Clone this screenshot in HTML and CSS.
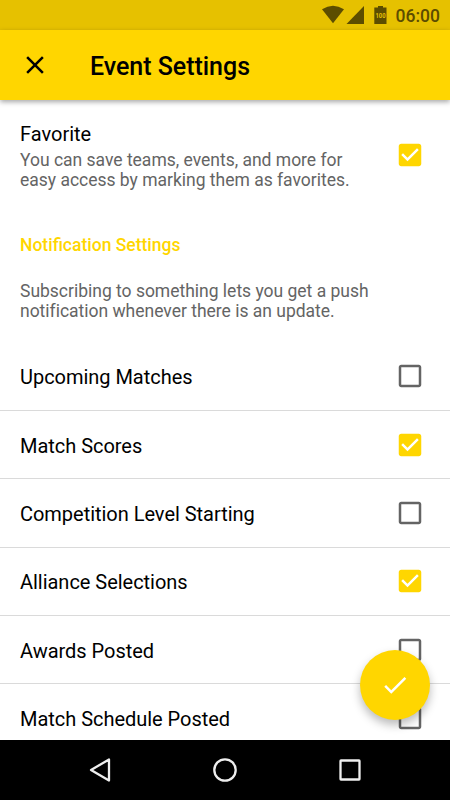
FILE: index.html
```html
<!DOCTYPE html>
<html lang="en">
<head>
<meta charset="utf-8">
<title>Event Settings</title>
<link rel="stylesheet" href="styles.css">
</head>
<body>
<svg width="0" height="0" class="defs">
  <symbol id="off" viewBox="0 0 24 24"><path d="M19 5v14H5V5h14m0-2H5c-1.1 0-2 .9-2 2v14c0 1.1.9 2 2 2h14c1.1 0 2-.9 2-2V5c0-1.1-.9-2-2-2z"/></symbol>
  <symbol id="on" viewBox="0 0 24 24"><path d="M19 3H5c-1.1 0-2 .9-2 2v14c0 1.1.9 2 2 2h14c1.1 0 2-.9 2-2V5c0-1.1-.9-2-2-2zm-9 14l-5-5 1.4-1.4 3.6 3.6 7.600-7.600L19 8l-9 9z"/></symbol>
</svg>
<div class="screen">
  <div class="status">
    <svg class="signals" width="70" height="30" viewBox="0 0 70 30">
      <path d="M2 9.300Q13 2.300 24 9.300L13 23.300z"/>
      <path d="M44 6v18H26.500z"/>
      <path d="M58 6h5v1.500h3.500V24H54.300V7.500H58z"/>
      <text x="60.500" y="17.700" text-anchor="middle" textLength="10" lengthAdjust="spacingAndGlyphs">100</text>
    </svg>
    <span class="clock">06:00</span>
  </div>
  <header class="bar">
    <svg class="close" width="30" height="30" viewBox="0 0 24 24"><path d="M19 6.410 17.590 5 12 10.590 6.410 5 5 6.410 10.590 12 5 17.590 6.410 19 12 13.410 17.590 19 19 17.590 13.410 12z"/></svg>
    <h1>Event Settings</h1>
  </header>
  <main class="content">
    <section class="favorite">
      <div class="text">
        <h2>Favorite</h2>
        <p>You can save teams, events, and more for<br>easy access by marking them as favorites.</p>
      </div>
      <svg class="check on"><use href="#on"/></svg>
    </section>
    <h3>Notification Settings</h3>
    <p class="intro">Subscribing to something lets you get a push<br>notification whenever there is an update.</p>
    <ul class="options">
      <li><span>Upcoming Matches</span><svg class="check"><use href="#off"/></svg></li>
      <li><span>Match Scores</span><svg class="check on"><use href="#on"/></svg></li>
      <li><span>Competition Level Starting</span><svg class="check"><use href="#off"/></svg></li>
      <li><span>Alliance Selections</span><svg class="check on"><use href="#on"/></svg></li>
      <li><span>Awards Posted</span><svg class="check"><use href="#off"/></svg></li>
      <li><span>Match Schedule Posted</span><svg class="check"><use href="#off"/></svg></li>
    </ul>
  </main>
  <button class="fab" aria-label="Save"><svg width="30" height="30" viewBox="0 0 24 24"><path d="M9 16.170 4.830 12l-1.420 1.410L9 19 21 7l-1.410-1.410z"/></svg></button>
  <nav class="nav">
    <svg width="30" height="30" viewBox="0 0 30 30"><path d="M24 4.500v21L6 15z"/></svg>
    <svg width="30" height="30" viewBox="0 0 30 30"><circle cx="15" cy="15" r="10.700"/></svg>
    <svg width="30" height="30" viewBox="0 0 30 30"><rect x="5.500" y="5.500" width="19" height="19" rx=".5"/></svg>
  </nav>
</div>
</body>
</html>
```
FILE: styles.css
```css
* { box-sizing: border-box; margin: 0; padding: 0; }
body { font-family: Roboto, sans-serif; background: #fff; overflow: hidden; }
.defs { position: absolute; }
.screen {
  position: relative;
  width: 450px;
  height: 800px;
  display: flex;
  flex-direction: column;
  overflow: hidden;
}
.status {
  flex: none;
  height: 30px;
  padding-right: 10px;
  display: flex;
  align-items: center;
  justify-content: flex-end;
  background: #e6c100;
  color: #5c4d00;
}
.signals { fill: #5c4d00; margin-right: 5.500px; }
.signals text { font-size: 7.500px; font-weight: 700; fill: #e6c100; }
.clock { font-size: 17.5px; font-weight: 500; line-height: 30px; padding-top: 1px; }
.bar {
  flex: none;
  z-index: 1;
  height: 70px;
  padding-left: 20px;
  display: flex;
  align-items: center;
  background: #ffd600;
  box-shadow: 0 2px 5px rgba(0, 0, 0, .35);
}
.bar h1 { margin-left: 40px; padding-top: 3px; font-size: 25px; font-weight: 500; line-height: 30px; letter-spacing: -.03px; }
.content { flex: 1; min-height: 0; overflow: hidden; }
.favorite {
  display: flex;
  align-items: center;
  justify-content: space-between;
  height: 110px;
  padding: 0 25px 0 20px;
}
.favorite .text { padding-top: 2px; }
.favorite h2 { font-size: 20px; font-weight: 400; line-height: 24px; margin-bottom: 4px; }
p { font-size: 17.5px; line-height: 20.5px; color: #646464; white-space: nowrap; letter-spacing: -.01px; }
.check { flex: none; width: 30px; height: 30px; fill: #646464; }
.check.on { fill: #ffd600; }
h3 { margin: 25px 20px 0; font-size: 17.5px; font-weight: 500; line-height: 20px; color: #ffd600; }
.intro { margin: 25.500px 20px 0; }
.options { list-style: none; margin-top: 21.100px; }
.options li {
  display: flex;
  align-items: center;
  justify-content: space-between;
  height: 68.330px;
  padding: 0 25px 0 20px;
  border-bottom: 1px solid #dadada;
  font-size: 20px;
  letter-spacing: -.03px;
}
.options li span { padding-top: 2px; }
.fab {
  position: absolute;
  left: 360px;
  top: 650px;
  width: 70px;
  height: 70px;
  display: flex;
  align-items: center;
  justify-content: center;
  border: 0;
  border-radius: 50%;
  background: #ffd600;
  box-shadow: 0 5px 10px rgba(0, 0, 0, .27);
}
.fab svg { fill: #fff; }
.nav {
  flex: none;
  z-index: 1;
  height: 60px;
  padding: 0 85px;
  display: flex;
  align-items: center;
  justify-content: space-between;
  background: #000;
}
.nav svg { fill: none; stroke: #eee; stroke-width: 2.300; stroke-linejoin: round; }
```
